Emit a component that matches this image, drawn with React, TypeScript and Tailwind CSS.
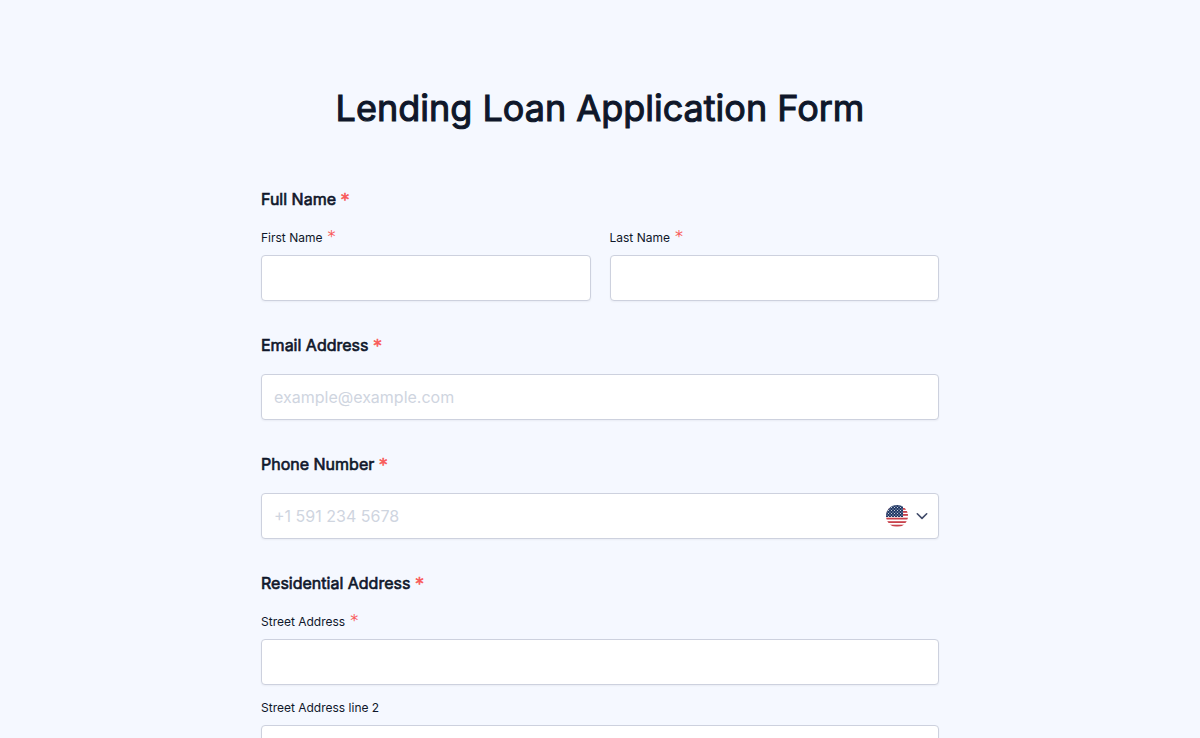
import React, { useState } from 'react';

interface FormData {
  firstName: string;
  lastName: string;
  email: string;
  phone: string;
  street: string;
  street2: string;
}

const EMPTY_FORM: FormData = {
  firstName: '',
  lastName: '',
  email: '',
  phone: '',
  street: '',
  street2: '',
};

const LABEL_CLASS = 'block text-base leading-6 font-normal [-webkit-text-stroke:0.04em]';

const INPUT_CLASS =
  'block w-full h-[46px] px-3 rounded border border-[#cdd1de] bg-white text-base text-[#0f172a] placeholder:text-[#cfd5df] shadow-[0_1px_2px_rgba(15,23,42,0.05)] focus:outline-none focus:border-blue-500';

const Required = () => (
  <span className="ml-[5px] font-['DejaVu_Sans',sans-serif] text-base leading-[0] font-normal text-[#f95c5c]">*</span>
);

interface TextFieldProps {
  id: string;
  label: string;
  required?: boolean;
  value: string;
  onChange: (value: string) => void;
}

const TextField: React.FC<TextFieldProps> = ({ id, label, required = false, value, onChange }) => (
  <div>
    <label htmlFor={id} className="block h-[18px] mb-2 text-xs leading-[18px]">
      {label}
      {required && <Required />}
    </label>
    <input
      id={id}
      type="text"
      required={required}
      value={value}
      onChange={(e) => onChange(e.target.value)}
      className={INPUT_CLASS}
    />
  </div>
);

const UsFlag = () => (
  <svg width="22" height="22" viewBox="0 0 22 22" aria-hidden="true">
    <defs>
      <clipPath id="flag-circle">
        <circle cx="11" cy="11" r="11" />
      </clipPath>
      <pattern id="flag-stars" width="3" height="3" patternUnits="userSpaceOnUse">
        <circle cx="1" cy="1" r="0.5" fill="#fff" />
        <circle cx="2.5" cy="2.5" r="0.5" fill="#fff" />
      </pattern>
    </defs>
    <g clipPath="url(#flag-circle)">
      <rect width="22" height="22" fill="#fff" />
      {[3, 6, 9, 12.7, 16.2, 19.7].map((y) => (
        <rect key={y} y={y} width="22" height="1.8" fill="#c8414b" />
      ))}
      <rect width="17" height="12" fill="#1f3765" />
      <rect width="17" height="12" fill="url(#flag-stars)" />
    </g>
  </svg>
);

export default function App() {
  const [formData, setFormData] = useState<FormData>(EMPTY_FORM);

  const update = (field: keyof FormData) => (value: string) => {
    setFormData({ ...formData, [field]: value });
  };

  return (
    <main className="min-h-screen bg-[#f5f8ff] px-6 pt-[88px] font-['Inter',sans-serif] text-[#0f172a]">
      <form className="mx-auto max-w-[678px]" onSubmit={(e) => e.preventDefault()}>
        <h1 className="mb-[59px] text-center text-4xl leading-[40px] font-normal [-webkit-text-stroke:0.03em]">
          Lending Loan Application Form
        </h1>

        <div className="space-y-8">
          <fieldset>
            <legend className={`${LABEL_CLASS} mb-[18px]`}>
              Full Name
              <Required />
            </legend>
            <div className="grid grid-cols-2 gap-[19px]">
              <TextField
                id="first-name"
                label="First Name"
                required
                value={formData.firstName}
                onChange={update('firstName')}
              />
              <TextField
                id="last-name"
                label="Last Name"
                required
                value={formData.lastName}
                onChange={update('lastName')}
              />
            </div>
          </fieldset>

          <div>
            <label htmlFor="email" className={`${LABEL_CLASS} mb-[17px]`}>
              Email Address
              <Required />
            </label>
            <input
              id="email"
              type="email"
              required
              placeholder="example@example.com"
              value={formData.email}
              onChange={(e) => update('email')(e.target.value)}
              className={INPUT_CLASS}
            />
          </div>

          <div>
            <label htmlFor="phone" className={`${LABEL_CLASS} mb-[17px]`}>
              Phone Number
              <Required />
            </label>
            <div className="relative">
              <input
                id="phone"
                type="tel"
                required
                placeholder="+1 591 234 5678"
                value={formData.phone}
                onChange={(e) => update('phone')(e.target.value)}
                className={INPUT_CLASS}
              />
              <button
                type="button"
                aria-label="Select country"
                className="absolute inset-y-0 right-0 flex items-center gap-2 pr-[10px] cursor-pointer"
              >
                <UsFlag />
                <svg
                  width="13"
                  height="8"
                  viewBox="0 0 13 8"
                  fill="none"
                  stroke="#3f4a68"
                  strokeWidth="1.6"
                  strokeLinecap="round"
                  strokeLinejoin="round"
                  aria-hidden="true"
                >
                  <path d="M1.3 1.8 6 6.4 10.7 1.8" />
                </svg>
              </button>
            </div>
          </div>

          <fieldset>
            <legend className={`${LABEL_CLASS} mb-[18px]`}>
              Residential Address
              <Required />
            </legend>
            <div className="space-y-[14px]">
              <TextField
                id="street"
                label="Street Address"
                required
                value={formData.street}
                onChange={update('street')}
              />
              <TextField
                id="street-2"
                label="Street Address line 2"
                value={formData.street2}
                onChange={update('street2')}
              />
            </div>
          </fieldset>
        </div>
      </form>
    </main>
  );
}
